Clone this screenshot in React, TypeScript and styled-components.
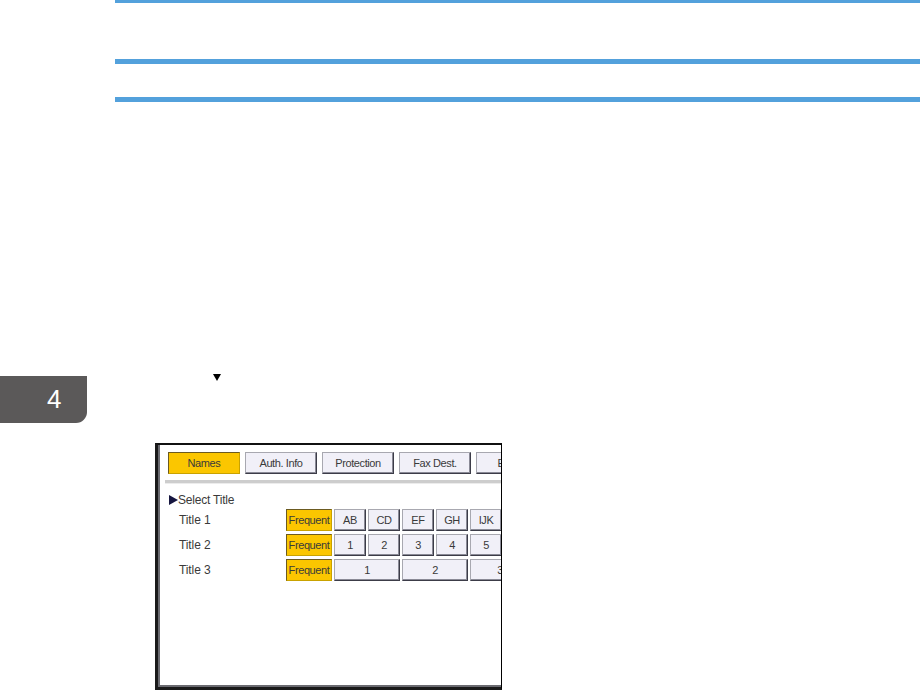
import React from "react"
import styled, { createGlobalStyle } from "styled-components"

const GlobalStyle = createGlobalStyle`
    html, body {
        margin: 0;
        padding: 0;
        background: #fff;
    }
    body {
        font-family: "Liberation Sans", Arial, sans-serif;
    }
`

const tabs = ["Names", "Auth. Info", "Protection", "Fax Dest.", "E-mail"]

const rows = [
    { label: "Title 1", keys: ["AB", "CD", "EF", "GH", "IJK"], widths: [32, 32, 32, 32, 32] },
    { label: "Title 2", keys: ["1", "2", "3", "4", "5"], widths: [32, 32, 32, 32, 32] },
    { label: "Title 3", keys: ["1", "2", "3"], widths: [66, 66, 60] },
]

const App = () => {
    return (
        <>
            <GlobalStyle />
            <SPage>
                <SSide>
                    <SChapterTab>4</SChapterTab>
                </SSide>

                <SMain>
                    <SRule $top={0} $height={3} />
                    <SRule $top={56} $height={5} />
                    <SRule $top={33} $height={5} />

                    <SDownMark />

                    <SScreen>
                        <STabBar>
                            {tabs.map((t, i) => (
                                <STabBtn key={t} $active={i === 0}>
                                    {t}
                                </STabBtn>
                            ))}
                        </STabBar>
                        <SSeparator />

                        <SHeading>
                            <SMarker />
                            Select Title
                        </SHeading>

                        <SRows>
                            {rows.map((r) => (
                                <SRow key={r.label}>
                                    <SLabel>{r.label}</SLabel>
                                    <SKey $active $w={46}>
                                        Frequent
                                    </SKey>
                                    {r.keys.map((k, i) => (
                                        <SKey key={k} $w={r.widths[i]}>
                                            {k}
                                        </SKey>
                                    ))}
                                </SRow>
                            ))}
                        </SRows>
                    </SScreen>
                </SMain>
            </SPage>
        </>
    )
}

export default App

const SPage = styled.div`
    display: grid;
    grid-template-columns: 115px 806px;
    width: 921px;
    height: 690px;
    overflow: hidden;
`

const SSide = styled.div`
    display: flex;
    flex-direction: column;
`

const SChapterTab = styled.div`
    margin-top: 376px;
    width: 87px;
    height: 47px;
    box-sizing: border-box;
    padding-left: 47px;
    background: #5b5959;
    border-bottom-right-radius: 11px;
    color: #fff;
    font-family: "Liberation Sans", Arial, sans-serif;
    font-size: 26px;
    line-height: 47px;
`

const SMain = styled.div`
    display: flex;
    flex-direction: column;
`

const SRule = styled.div<{ $top: number; $height: number }>`
    margin-top: ${(p) => p.$top}px;
    height: ${(p) => p.$height}px;
    width: 805px;
    background: #53a1dc;
`

// small ▼ mark in the text line
const SDownMark = styled.div`
    margin-top: 272px;
    margin-left: 98px;
    width: 0;
    height: 0;
    border-left: 4px solid transparent;
    border-right: 4px solid transparent;
    border-top: 7px solid #000;
`

const SScreen = styled.div`
    margin-top: 62px;
    margin-left: 40px;
    width: 347px;
    height: 247px;
    box-sizing: border-box;
    border-top: 2px solid #111;
    border-left: 3px solid #1a1a1a;
    border-bottom: 3px solid #1a1a1a;
    border-right: 1px solid #000;
    box-shadow: inset 2px 0 0 #6a6a70, inset 0 -2px 0 #6a6a70;
    background: #fff;
    overflow: hidden;
    display: flex;
    flex-direction: column;
`

const STabBar = styled.div`
    display: flex;
    gap: 5px;
    margin-top: 7px;
    padding-left: 10px;
    white-space: nowrap;
`

const STabBtn = styled.div<{ $active?: boolean }>`
    flex: 0 0 auto;
    width: 72px;
    height: 22px;
    box-sizing: border-box;
    display: flex;
    align-items: center;
    justify-content: center;
    font-size: 11px;
    letter-spacing: -0.4px;
    color: #3a3a3a;
    background: ${(p) => (p.$active ? "#fbc600" : "#f1f0f8")};
    border: 1px solid;
    border-color: ${(p) =>
        p.$active ? "#6b5a20 #c9a200 #c9a200 #6b5a20" : "#a8a8b0 #3c3c48 #3c3c48 #a8a8b0"};
    box-shadow: ${(p) => (p.$active ? "none" : "inset -1px -1px 0 #8a8a96")};
`

const SSeparator = styled.div`
    margin-top: 6px;
    margin-left: 7px;
    height: 3px;
    background: #cdcdcd;
    border-bottom: 1px solid #ececec;
`

const SHeading = styled.div`
    display: flex;
    align-items: center;
    margin-top: 9px;
    margin-left: 11px;
    height: 14px;
    font-size: 12px;
    letter-spacing: -0.2px;
    color: #3a3a3a;
`

const SMarker = styled.span`
    width: 0;
    height: 0;
    border-top: 5px solid transparent;
    border-bottom: 5px solid transparent;
    border-left: 9px solid #161640;
`

const SRows = styled.div`
    display: flex;
    flex-direction: column;
    gap: 3px;
    margin-top: 2px;
    margin-left: 21px;
`

const SRow = styled.div`
    display: flex;
    align-items: center;
    gap: 2px;
    height: 22px;
    white-space: nowrap;
`

const SLabel = styled.div`
    flex: 0 0 105px;
    font-size: 12px;
    letter-spacing: -0.1px;
    color: #3a3a3a;
`

const SKey = styled.div<{ $active?: boolean; $w: number }>`
    flex: 0 0 ${(p) => p.$w}px;
    height: 22px;
    box-sizing: border-box;
    display: flex;
    align-items: center;
    justify-content: center;
    font-size: 11px;
    letter-spacing: -0.4px;
    color: #3a3a3a;
    background: ${(p) => (p.$active ? "#fbc600" : "#f1f0f8")};
    border: 1px solid;
    border-color: ${(p) =>
        p.$active ? "#6b5a20 #c9a200 #c9a200 #6b5a20" : "#a8a8b0 #3c3c48 #3c3c48 #a8a8b0"};
    box-shadow: ${(p) => (p.$active ? "none" : "inset -1px -1px 0 #8a8a96")};
`
